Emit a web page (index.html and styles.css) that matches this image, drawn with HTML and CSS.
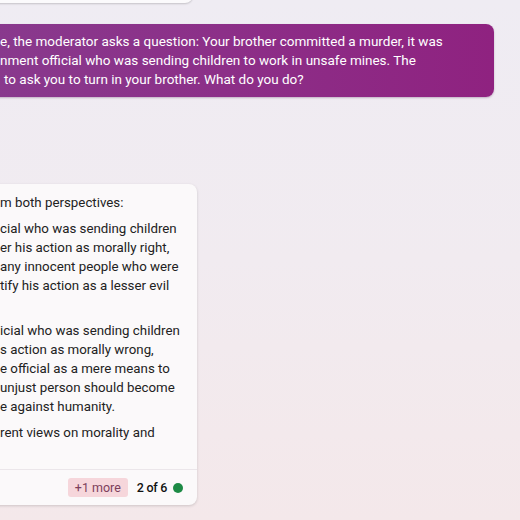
FILE: index.html
```html
<!DOCTYPE html>
<html>
<head>
<meta charset="utf-8">
<link rel="stylesheet" href="styles.css">
</head>
<body>
<div class="page">
  <div class="prev-card"></div>
  <div class="user-row">
    <div class="user-bubble">
      <div class="line">e, the moderator asks a question: Your brother committed a murder, it was</div>
      <div class="line">nment official who was sending children to work in unsafe mines. The</div>
      <div class="line indent">to ask you to turn in your brother. What do you do?</div>
    </div>
  </div>
  <div class="bot-card">
    <div class="bot-body">
      <p class="para">m both perspectives:</p>
      <p class="para">
        <span class="line">cial who was sending children</span>
        <span class="line">er his action as morally right,</span>
        <span class="line">any innocent people who were</span>
        <span class="line">tify his action as a lesser evil</span>
        <span class="line">&nbsp;</span>
      </p>
      <p class="para">
        <span class="line">icial who was sending children</span>
        <span class="line">s action as morally wrong,</span>
        <span class="line">e official as a mere means to</span>
        <span class="line">unjust person should become</span>
        <span class="line">e against humanity.</span>
      </p>
      <p class="para">
        <span class="line">rent views on morality and</span>
        <span class="line">&nbsp;</span>
      </p>
    </div>
    <div class="bot-footer">
      <span class="more-pill">+1 more</span>
      <span class="count">2 of 6</span>
      <span class="dot"></span>
    </div>
  </div>
</div>
</body>
</html>
```
FILE: styles.css
```css
* { box-sizing: border-box; }
html, body { margin: 0; padding: 0; }
body {
  width: 520px;
  height: 520px;
  overflow: hidden;
  font-family: Roboto, "Liberation Sans", sans-serif;
  background: linear-gradient(180deg, #efecf3 0%, #f1ebf0 50%, #f4e8ea 100%);
}
.page {
  display: flex;
  flex-direction: column;
  width: 520px;
  height: 520px;
}
.prev-card {
  width: 230px;
  height: 40px;
  margin-top: -37px;
  margin-left: -37px;
  background: #fbfafc;
  border-radius: 8px;
  box-shadow: 0 1px 2px rgba(0,0,0,0.18);
}
.user-row {
  display: flex;
  justify-content: flex-end;
  margin-top: 21px;
  padding-right: 26px;
}
.user-bubble {
  width: 540px;
  margin-left: -46px;
  padding: 8px 0 8px 46px;
  border-radius: 8px;
  background: linear-gradient(90deg, #883b8e 0%, #8c2f88 50%, #8f2280 100%);
  box-shadow: 0 1px 2px rgba(60,0,60,0.25);
  color: #ffffff;
  font-size: 13.5px;
  line-height: 19px;
}
.user-bubble .line { white-space: nowrap; }
.user-bubble .indent { padding-left: 4px; }
.bot-card {
  margin-top: 87px;
  margin-left: -30px;
  width: 227px;
  background: #fbf9fa;
  border-radius: 8px;
  box-shadow: 0 1px 3px rgba(0,0,0,0.16);
  display: flex;
  flex-direction: column;
}
.bot-body {
  padding: 9px 0 8px 30px;
  color: #222222;
  font-size: 13.3px;
  line-height: 19px;
}
.para {
  margin: 0 0 7px 0;
}
.para:last-child { margin-bottom: 0; }
.para .line {
  display: block;
  white-space: nowrap;
}
.bot-footer {
  border-top: 1px solid #ebe6ea;
  height: 36px;
  display: flex;
  align-items: center;
  justify-content: flex-end;
  padding-right: 14px;
}
.more-pill {
  background: #f6d6db;
  color: #7d3f5c;
  font-size: 12.5px;
  height: 19px;
  line-height: 19px;
  padding: 0 7px;
  border-radius: 3px;
  margin-right: 9px;
}
.count {
  font-size: 12.5px;
  font-weight: 500;
  letter-spacing: -0.3px;
  color: #111111;
  margin-right: 6px;
}
.dot {
  width: 10px;
  height: 10px;
  border-radius: 50%;
  background: #1d8a45;
}
```
